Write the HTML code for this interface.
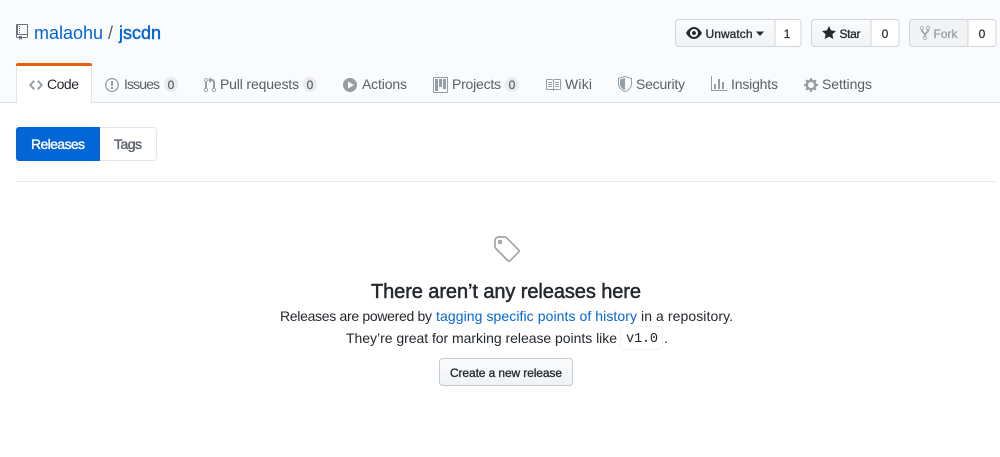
<!DOCTYPE html>
<html lang="en"><head><meta charset="utf-8"><title>Releases · malaohu/jscdn</title>
<style>
html,body{margin:0;padding:0;background:#fff;width:1000px;height:457px;overflow:hidden}
svg{display:block;font-family:"Liberation Sans",Arial,sans-serif}
path{fill-rule:evenodd}
.t{font-size:14px;fill:#586069}
.b{font-size:12px;fill:#24292e;stroke:#24292e;stroke-width:.3px}
.c{font-size:12px;fill:#24292e;stroke:#24292e;stroke-width:.2px;text-anchor:middle}
.n{stroke:#586069}
.i{fill:#959da5}
.bd{fill:#e9ebee}
.p{font-size:14px;fill:#24292e}
</style></head><body>
<svg width="1000" height="457" viewBox="0 0 1000 457" xmlns="http://www.w3.org/2000/svg">
<defs><linearGradient id="g" x1="0" y1="0" x2="0" y2="1"><stop offset="0" stop-color="#fafbfc"/><stop offset="1" stop-color="#eff3f6"/></linearGradient></defs>
<rect width="1000" height="103" fill="#fafbfc"/>
<rect y="102" width="1000" height="1" fill="#e1e4e8"/>

<path transform="translate(16,24)" style="fill:#6a737d" d="M4 9H3V8h1v1zm0-3H3v1h1V6zm0-2H3v1h1V4zm0-2H3v1h1V2zm8-1v12c0 .55-.45 1-1 1H6v2l-1.5-1.5L3 16v-2H1c-.55 0-1-.45-1-1V1c0-.55.45-1 1-1h10c.55 0 1 .45 1 1zm-1 10H1v2h2v-1h3v1h5v-2zm0-10H2v9h9V1z"/>
<text x="34" y="39" font-size="18" fill="#0366d6" textLength="69">malaohu</text>
<text x="108" y="39" font-size="18" fill="#586069">/</text>
<text x="119" y="39" font-size="18" fill="#0366d6" stroke="#0366d6" stroke-width=".45" textLength="42">jscdn</text>

<rect x="675.5" y="19.5" width="100" height="27" rx="3" fill="url(#g)" stroke="#d1d5da"/>
<path d="M775 19.5h23a3 3 0 0 1 3 3v21a3 3 0 0 1-3 3h-23z" fill="#fff" stroke="#d1d5da"/>
<path transform="translate(686,25)" fill="#24292e" d="M8.060 2C3 2 0 8 0 8s3 6 8.060 6C13 14 16 8 16 8s-3-6-7.940-6zM8 12c-2.200 0-4-1.780-4-4 0-2.200 1.800-4 4-4 2.220 0 4 1.800 4 4 0 2.220-1.780 4-4 4zm2-4c0 1.110-.89 2-2 2-1.110 0-2-.89-2-2 0-1.110.89-2 2-2 1.110 0 2 .89 2 2z"/>
<text x="705.500" y="38" class="b" textLength="47">Unwatch</text>
<path d="M756 31.500h8l-4 4.500z" fill="#24292e"/>
<text x="787" y="38" class="c">1</text>

<rect x="811.500" y="19.500" width="60" height="27" rx="3" fill="url(#g)" stroke="#d1d5da"/>
<path d="M871 19.500h25a3 3 0 0 1 3 3v21a3 3 0 0 1-3 3h-25z" fill="#fff" stroke="#d1d5da"/>
<path transform="translate(822,25)" fill="#24292e" d="M14 6l-4.900-.64L7 1 4.900 5.360 0 6l3.600 3.260L2.670 14 7 11.670 11.330 14l-.93-4.740L14 6z"/>
<text x="839.500" y="38" class="b" textLength="21">Star</text>
<text x="885" y="38" class="c">0</text>

<rect x="909.500" y="19.500" width="59" height="27" rx="3" fill="#f1f3f5" stroke="#d1d5da"/>
<path d="M968 19.500h25a3 3 0 0 1 3 3v21a3 3 0 0 1-3 3h-25z" fill="#fff" stroke="#d1d5da"/>
<path transform="translate(920,25)" fill="#a3a8ad" d="M8 1a1.993 1.993 0 0 0-1 3.720V6L5 8 3 6V4.720A1.993 1.993 0 0 0 2 1a1.993 1.993 0 0 0-1 3.720V6.500l3 3v1.780A1.993 1.993 0 0 0 5 15a1.993 1.993 0 0 0 1-3.720V9.500l3-3V4.720A1.993 1.993 0 0 0 8 1zM2 4.200C1.340 4.200.8 3.650.8 3c0-.65.55-1.200 1.200-1.200.65 0 1.200.55 1.200 1.200 0 .65-.55 1.200-1.200 1.200zm3 10c-.66 0-1.200-.55-1.200-1.200 0-.65.55-1.200 1.200-1.200.65 0 1.200.55 1.200 1.200 0 .65-.55 1.200-1.200 1.200zm3-10c-.66 0-1.200-.55-1.200-1.200 0-.65.55-1.200 1.200-1.200.65 0 1.200.55 1.200 1.200 0 .65-.55 1.200-1.200 1.200z"/>
<text x="933.500" y="38" class="b" textLength="24" style="fill:#9a9ea3;stroke:#9a9ea3">Fork</text>
<text x="982" y="38" class="c">0</text>

<rect x="16.500" y="66" width="75" height="37" fill="#fff"/>
<path d="M16.500 66v37M91.500 66v37" stroke="#e1e4e8" fill="none"/>
<path d="M16 66v-1a2 2 0 0 1 2-2h72a2 2 0 0 1 2 2v1z" fill="#e36209"/>

<path transform="translate(29,77)" class="i" d="M9.500 3L8 4.500 11.500 8 8 11.500 9.500 13 14 8 9.500 3zm-5 0L0 8l4.500 5L6 11.500 2.500 8 6 4.500 4.500 3z"/>
<text x="47" y="89" class="p" textLength="32">Code</text>

<path transform="translate(105,77)" class="i" d="M7 2.300c3.140 0 5.700 2.560 5.700 5.700s-2.560 5.700-5.700 5.700A5.710 5.710 0 0 1 1.300 8c0-3.140 2.560-5.700 5.700-5.700zM7 1C3.140 1 0 4.140 0 8s3.140 7 7 7 7-3.140 7-7-3.140-7-7-7zm1 3H6v5h2V4zm0 6H6v2h2v-2z"/>
<text x="124" y="89" class="t" textLength="36">Issues</text>
<rect x="164" y="77" width="14" height="15" rx="7" class="bd"/>
<text x="171" y="89" class="c n" style="fill:#586069">0</text>

<path transform="translate(204,77)" class="i" d="M11 11.280V5c-.03-.78-.34-1.470-.94-2.060C9.460 2.350 8.780 2.030 8 2H7V0L4 3l3 3V4h1c.27.02.48.11.69.31.21.2.3.42.31.69v6.280A1.993 1.993 0 0 0 10 15a1.993 1.993 0 0 0 1-3.720zm-1 2.920c-.66 0-1.200-.55-1.200-1.200 0-.65.55-1.200 1.200-1.200.65 0 1.200.55 1.200 1.200 0 .65-.55 1.200-1.200 1.200zM4 3c0-1.110-.89-2-2-2a1.993 1.993 0 0 0-1 3.720v6.560A1.993 1.993 0 0 0 2 15a1.993 1.993 0 0 0 1-3.720V4.720c.59-.34 1-.98 1-1.720zm-.8 10c0 .66-.55 1.200-1.200 1.200-.65 0-1.200-.55-1.200-1.200 0-.65.55-1.200 1.200-1.200.65 0 1.200.55 1.200 1.200zM2 4.200C1.340 4.200.8 3.650.8 3c0-.65.55-1.200 1.200-1.200.65 0 1.200.55 1.200 1.200 0 .65-.55 1.200-1.200 1.200z"/>
<text x="220" y="89" class="t" textLength="79">Pull requests</text>
<rect x="303" y="77" width="14" height="15" rx="7" class="bd"/>
<text x="310" y="89" class="c n" style="fill:#586069">0</text>

<path transform="translate(343,77)" class="i" d="M14 8A7 7 0 1 1 0 8a7 7 0 0 1 14 0zM5 4.500v7L11 8 5 4.500z"/>
<text x="362" y="89" class="t" textLength="45">Actions</text>

<path transform="translate(433,77)" class="i" d="M10 12h3V2h-3v10zm-4-2h3V2H6v8zm-4 4h3V2H2v12zm-1 1h13V1H1v14zM14 0H1a1 1 0 0 0-1 1v14a1 1 0 0 0 1 1h13a1 1 0 0 0 1-1V1a1 1 0 0 0-1-1z"/>
<text x="452" y="89" class="t" textLength="49">Projects</text>
<rect x="505" y="77" width="14" height="15" rx="7" class="bd"/>
<text x="512" y="89" class="c n" style="fill:#586069">0</text>

<path transform="translate(545,77)" class="i" d="M3 5h4v1H3V5zm0 3h4V7H3v1zm0 2h4V9H3v1zm11-5h-4v1h4V5zm0 2h-4v1h4V7zm0 2h-4v1h4V9zm2-6v9c0 .55-.45 1-1 1H9.500l-1 1-1-1H2c-.55 0-1-.45-1-1V3c0-.55.45-1 1-1h5.500l1 1 1-1H15c.55 0 1 .45 1 1zm-8 .5L7.500 3H2v9h6V3.500zm7-.5H9.500l-.5.5V12h6V3z"/>
<text x="565" y="89" class="t" textLength="27">Wiki</text>

<path transform="translate(618,76)" class="i" d="M0 2l7-2 7 2v6.020C14 12.690 8.690 16 7 16c-1.690 0-7-3.310-7-7.980V2zm1 .75L7 1l6 1.750v5.268C13 12.104 8.449 15 7 15c-1.449 0-6-2.896-6-6.982V2.750zm1 .75L7 2v12c-1.207 0-5-2.413-5-5.818V3.500z"/>
<text x="636" y="89" class="t" textLength="49">Security</text>

<path transform="translate(711,76)" class="i" d="M16 14v1H0V0h1v14h15zM5 13H3V8h2v5zm4 0H7V3h2v10zm4 0h-2V6h2v7z"/>
<text x="731" y="89" class="t" textLength="47">Insights</text>

<path transform="translate(804,77)" class="i" d="M14 8.770v-1.600l-1.940-.64-.45-1.090.88-1.840-1.130-1.130-1.810.91-1.090-.45-.69-1.920h-1.600l-.63 1.940-1.110.45-1.840-.88-1.130 1.130.91 1.810-.45 1.090L0 7.230v1.590l1.940.64.45 1.090-.88 1.840 1.130 1.130 1.810-.91 1.090.45.69 1.920h1.590l.63-1.940 1.110-.45 1.840.88 1.130-1.130-.92-1.810.47-1.090L14 8.750v.02zM7 11c-1.660 0-3-1.340-3-3s1.340-3 3-3 3 1.340 3 3-1.340 3-3 3z"/>
<text x="822" y="89" class="t" textLength="50">Settings</text>

<rect x="16.500" y="127.500" width="140" height="33" rx="3" fill="#fff" stroke="#e1e4e8"/>
<path d="M19 127h81v34H19a3 3 0 0 1-3-3v-28a3 3 0 0 1 3-3z" fill="#0366d6"/>
<text x="31" y="149" font-size="14" fill="#fff" stroke="#fff" stroke-width=".35" textLength="54">Releases</text>
<text x="114" y="149" font-size="14" fill="#586069" stroke="#586069" stroke-width=".35" textLength="28">Tags</text>
<rect x="16" y="181" width="980" height="1" fill="#eaecef"/>

<path transform="translate(492,234) scale(2)" fill="#a3aab1" d="M7.730 1.730C7.260 1.260 6.620 1 5.960 1H3.500C2.130 1 1 2.130 1 3.500v2.470c0 .66.27 1.300.73 1.770l6.060 6.060c.39.39 1.020.39 1.410 0l4.590-4.590a.996.996 0 0 0 0-1.410L7.730 1.730zM2.380 7.090c-.31-.3-.47-.7-.47-1.130V3.500c0-.88.72-1.590 1.590-1.590h2.470c.42 0 .83.16 1.130.47l6.140 6.130-4.730 4.730-6.130-6.150zM3.010 3h2v2H3V3h.01z"/>
<text x="371" y="298" font-size="20" fill="#24292e" stroke="#24292e" stroke-width=".5" textLength="270">There aren’t any releases here</text>
<text x="280" y="321" class="p" textLength="152">Releases are powered by</text>
<text x="436" y="321" font-size="14" fill="#0366d6" textLength="201">tagging specific points of history</text>
<text x="641" y="321" class="p" textLength="92">in a repository.</text>
<text x="346" y="343" class="p" textLength="271">They’re great for marking release points like</text>
<rect x="620.500" y="326.500" width="42" height="23" rx="3" fill="#fff" stroke="#f1f2f4"/>
<text x="626" y="342" font-size="13.600" fill="#24292e" style="font-family:'Liberation Mono',monospace" textLength="32">v1.0</text>
<text x="664" y="343" class="p">.</text>
<rect x="439.500" y="358.500" width="133" height="27" rx="3" fill="url(#g)" stroke="#c6cbd1"/>
<text x="450" y="377" class="b" textLength="112">Create a new release</text>
</svg>
</body></html>
